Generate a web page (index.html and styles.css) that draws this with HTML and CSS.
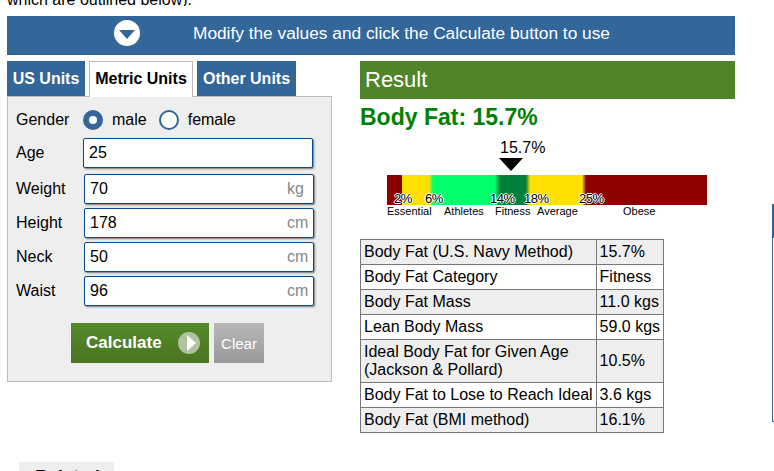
FILE: index.html
```html
<!DOCTYPE html>
<html lang="en">
<head>
    <meta charset="UTF-8">
    <title>Body Fat Calculator</title>
    <link rel="stylesheet" href="styles.css">
</head>
<body>

<p class="intro"><span>which are outlined below).</span></p>

<div class="banner">
  <svg class="banner_icon" width="26" height="26" viewBox="0 0 26 26">
    <circle cx="13" cy="13" r="13" fill="#fff"/>
    <path d="M5 10H21L13 19Z" fill="#336699"/>
  </svg>
  <span>Modify the values and click the Calculate button to use</span>
</div>

<div class="columns">
  <div class="calc">
    <div class="tabs">
      <a class="tab tab_us">US Units</a>
      <a class="tab tab_metric active">Metric Units</a>
      <a class="tab tab_other">Other Units</a>
    </div>
    <form class="panel">
      <div class="gender">
        <span class="gender_label">Gender</span>
        <span class="radio checked"></span><span class="radio_text">male</span>
        <span class="radio"></span><span>female</span>
      </div>
      <div class="row row_age">
        <label>Age</label>
        <div class="field"><span>25</span></div>
      </div>
      <div class="row">
        <label>Weight</label>
        <div class="field"><span>70</span><span class="unit">kg</span></div>
      </div>
      <div class="row">
        <label>Height</label>
        <div class="field"><span>178</span><span class="unit">cm</span></div>
      </div>
      <div class="row">
        <label>Neck</label>
        <div class="field"><span>50</span><span class="unit">cm</span></div>
      </div>
      <div class="row">
        <label>Waist</label>
        <div class="field"><span>96</span><span class="unit">cm</span></div>
      </div>
      <div class="actions">
        <button type="button" class="btn_calc">Calculate
          <svg width="24" height="24" viewBox="0 0 24 24">
            <circle cx="12" cy="12" r="11" fill="#aec3a0"/>
            <path d="M10 4L19 12L10 20Z" fill="#fff"/>
          </svg>
        </button>
        <button type="button" class="btn_clear">Clear</button>
      </div>
    </form>
  </div>

  <div class="result">
    <h2 class="result_head">Result</h2>
    <div class="result_big">Body Fat: 15.7%</div>
    <div class="gauge">
      <div class="gauge_value">15.7%</div>
      <div class="gauge_arrow"></div>
      <div class="gauge_bar"></div>
      <span class="tick" style="left:7px">2%</span>
      <span class="tick" style="left:38px">6%</span>
      <span class="tick" style="left:103px">14%</span>
      <span class="tick" style="left:137px">18%</span>
      <span class="tick" style="left:192px">25%</span>
      <span class="cat" style="left:0">Essential</span>
      <span class="cat" style="left:57px">Athletes</span>
      <span class="cat" style="left:108px">Fitness</span>
      <span class="cat" style="left:150px">Average</span>
      <span class="cat" style="left:236px">Obese</span>
    </div>
    <table class="result_table">
      <tr class="odd"><td>Body Fat (U.S. Navy Method)</td><td>15.7%</td></tr>
      <tr><td>Body Fat Category</td><td>Fitness</td></tr>
      <tr class="odd"><td>Body Fat Mass</td><td>11.0 kgs</td></tr>
      <tr><td>Lean Body Mass</td><td>59.0 kgs</td></tr>
      <tr class="odd"><td>Ideal Body Fat for Given Age<br>(Jackson &amp; Pollard)</td><td>10.5%</td></tr>
      <tr><td>Body Fat to Lose to Reach Ideal</td><td>3.6 kgs</td></tr>
      <tr class="odd"><td>Body Fat (BMI method)</td><td>16.1%</td></tr>
    </table>
  </div>
</div>

<div class="related">Related</div>
<div class="side_box"></div>

</body>
</html>
```

FILE: styles.css
```css
html, body{
  margin: 0;
  height: 471px;
  overflow: hidden;
}
body{
  font-family: "Liberation Sans", Arial, sans-serif;
  font-size: 16px;
  color: #000;
  background-color: #fff;
  padding: 0 7px;
  box-sizing: border-box;
  position: relative;
}
.intro{
  margin: 0 0 10px;
  height: 6px;
  overflow: hidden;
  display: flex;
  align-items: flex-end;
}
.intro span{
  line-height: 18px;
  margin-bottom: -3px;
}

.banner{
  width: 728px;
  height: 39px;
  background-color: #336699;
  color: #fff;
  font-size: 17.3px;
  display: flex;
  align-items: center;
  gap: 53px;
  padding: 0 0 5px 107px;
  box-sizing: border-box;
}
.banner_icon{
  flex: none;
}

.columns{
  display: flex;
  gap: 28px;
  margin-top: 6px;
}

.calc{
  width: 325px;
}
.tabs{
  display: flex;
  gap: 4px;
  height: 35px;
}
.tab{
  font-weight: bold;
  background-color: #336699;
  color: #fff;
  text-align: center;
  line-height: 35px;
  box-sizing: border-box;
}
.tab_us{
  width: 78px;
}
.tab_metric{
  width: 104px;
}
.tab_other{
  width: 99px;
}
.tab.active{
  color: #000;
  border: 1px solid #bbb;
  border-bottom: 0;
  height: 36px;
  line-height: 34px;
  background-color: #fff;
  position: relative;
  z-index: 1;
}
.panel{
  height: 286px;
  box-sizing: border-box;
  background-color: #eee;
  border: 1px solid #bbb;
  padding: 11px 8px 0;
}
.gender{
  display: flex;
  align-items: center;
  height: 24px;
}
.gender_label{
  width: 67px;
}
.radio{
  width: 20px;
  height: 20px;
  box-sizing: border-box;
  border: 2px solid #336699;
  border-radius: 50%;
  background-color: #fff;
  margin-right: 9px;
}
.radio.checked{
  background-color: #336699;
  position: relative;
}
.radio.checked::after{
  content: '';
  position: absolute;
  top: 4px;
  left: 4px;
  width: 8px;
  height: 8px;
  border-radius: 50%;
  background-color: #fff;
}
.radio_text{
  margin-right: 12px;
}
.row{
  display: flex;
  align-items: center;
  margin-top: 4px;
}
.row label{
  width: 68px;
  flex: none;
}
.row_age{
  margin-top: 6px;
  margin-bottom: 6px;
}
.row_age label{
  width: 67px;
}
.field{
  width: 230px;
  height: 30px;
  box-sizing: border-box;
  background-color: #fff;
  border: 1px solid #044b94;
  border-radius: 2px;
  box-shadow: 1px 1px 2px #777;
  padding: 0 5px;
  display: flex;
  align-items: center;
  justify-content: space-between;
}
.unit{
  color: #888;
  width: 21px;
}
.actions{
  display: flex;
  gap: 5px;
  margin-top: 17px;
  margin-left: 55px;
}
.actions button{
  font-family: "Liberation Sans", Arial, sans-serif;
  border: 0;
  color: #fff;
  height: 40px;
  padding: 0;
}
.actions .btn_calc{
  width: 138px;
  font-size: 17px;
  font-weight: bold;
  background: linear-gradient(#558a2a, #4a7522);
  display: flex;
  align-items: center;
  gap: 15px;
  padding-left: 15px;
  box-sizing: border-box;
}
.actions .btn_clear{
  width: 50px;
  font-size: 15px;
  background: linear-gradient(#b8b8b8, #999);
}

.result{
  width: 375px;
}
.result_head{
  margin: 0;
  height: 38px;
  line-height: 38px;
  background-color: #518428;
  color: #fff;
  font-weight: normal;
  font-size: 22px;
  padding-left: 5px;
}
.result_big{
  font-size: 23px;
  font-weight: bold;
  color: #008000;
  line-height: 26px;
  margin-top: 5px;
}
.gauge{
  position: relative;
  height: 101px;
  margin-left: 27px;
  margin-top: 8px;
  width: 320px;
  font-size: 11px;
}
.gauge_value{
  position: absolute;
  left: 113px;
  top: 1px;
  font-size: 16px;
  line-height: 18px;
}
.gauge_arrow{
  position: absolute;
  left: 112px;
  top: 20px;
  width: 0;
  height: 0;
  border-left: 12.5px solid transparent;
  border-right: 12.5px solid transparent;
  border-top: 13px solid #000;
}
.gauge_bar{
  position: absolute;
  left: 0;
  top: 37px;
  width: 320px;
  height: 30px;
  background: linear-gradient(90deg, #8b0000 15px, #ffe000 15px, #ffe000 42px, #00ff6a 46px, #00ff6a 108px, #00803a 113px, #00803a 139px, #ffe000 143px, #ffe000 195px, #8b0000 199px);
}
.tick{
  position: absolute;
  top: 55px;
  font-size: 13px;
  letter-spacing: -0.5px;
  line-height: 12px;
  color: #000;
  text-shadow: -1px 0 #fff, 1px 0 #fff, 0 -1px #fff, 0 1px #fff;
}
.cat{
  position: absolute;
  top: 68px;
  line-height: 11px;
}
.result_table{
  border-collapse: collapse;
  line-height: 18px;
}
.result_table td{
  border: 1px solid #777;
  padding: 3px;
}
.result_table .odd{
  background-color: #eee;
}

.related{
  position: absolute;
  left: 19px;
  top: 462px;
  width: 95px;
  height: 30px;
  background-color: #eee;
  font-size: 18px;
  font-weight: bold;
  padding: 5px 0 0 16px;
  box-sizing: border-box;
}
.side_box{
  position: absolute;
  left: 772px;
  top: 204px;
  width: 2px;
  height: 218px;
  box-sizing: border-box;
  border-left: 1px solid #336699;
  border-bottom: 1px solid #336699;
}
.side_box::before{
  content: '';
  display: block;
  width: 1px;
  height: 34px;
  background-color: #336699;
}
```
